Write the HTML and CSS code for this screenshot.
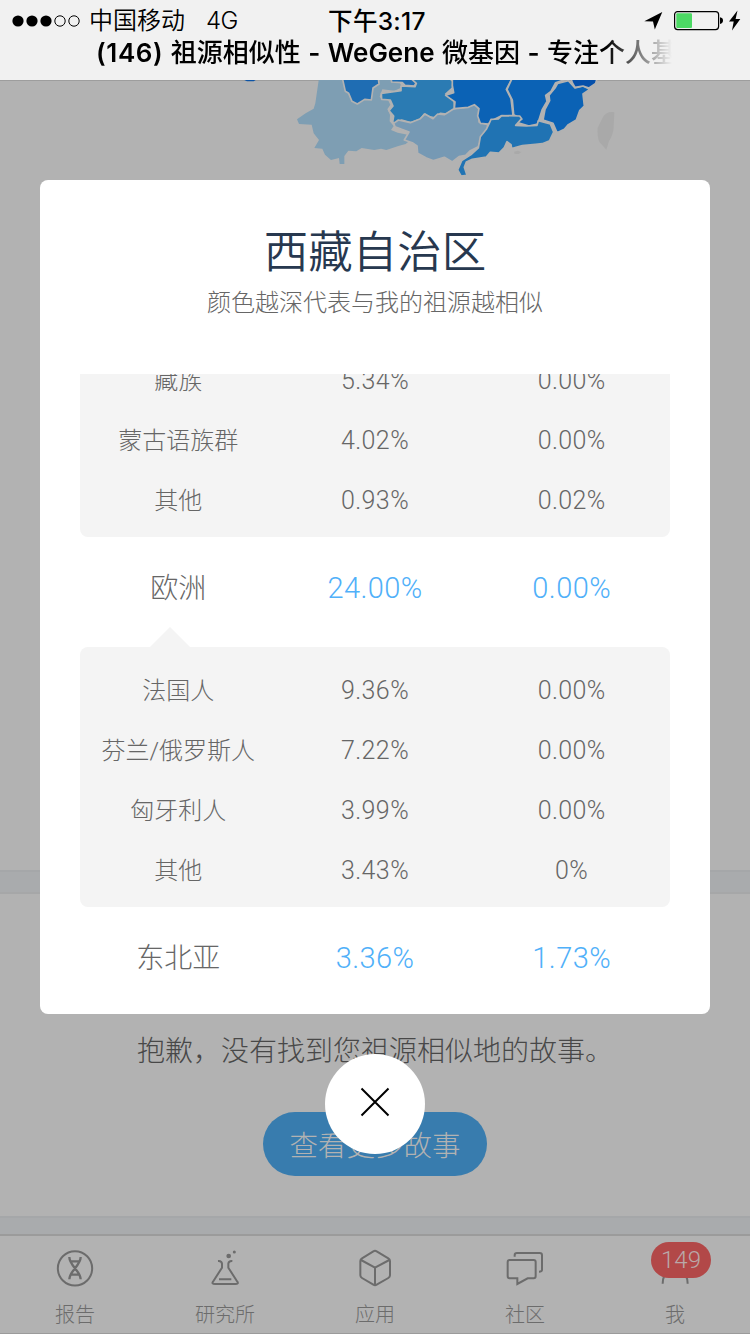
FILE: index.html
```html
<!DOCTYPE html>
<html lang="zh-CN">
<head>
<meta charset="utf-8">
<title>祖源相似性 - WeGene 微基因</title>
<link rel="stylesheet" href="styles.css">
</head>
<body>
<div class="screen">
  <header class="topbar">
    <div class="status">
      <div class="status-left">
        <svg class="signal" width="70" height="14" viewBox="0 0 70 14"><g fill="#000"><circle cx="6" cy="7" r="5.6"/><circle cx="20" cy="7" r="5.6"/><circle cx="34" cy="7" r="5.6"/></g><g fill="none" stroke="#000" stroke-width="1"><circle cx="48" cy="7" r="5.2"/><circle cx="62" cy="7" r="5.2"/></g></svg>
        <span class="carrier">中国移动</span>
        <span class="network">4G</span>
      </div>
      <div class="clock">下午3:17</div>
      <div class="status-right">
        <svg width="100" height="24" viewBox="0 0 100 24">
          <path d="M22.3 4 4.3 13.3 13 13.500 14.8 21.500Z"/>
          <rect x="34.6" y="3.6" width="44" height="18" rx="3" fill="none" stroke="#000" stroke-width="1.2"/>
          <rect x="36.3" y="5.3" width="15.7" height="14.6" rx="1" fill="#4cd964"/>
          <path d="M80 9.2q3 .5 3 3.4t-3 3.4Z"/>
          <path d="M97.500 2.500 89 13.500h4.700L92 22.500l8.300-11.500h-4.700Z"/>
        </svg>
      </div>
    </div>
    <div class="page-title"><span class="count">(146)</span> <span class="han">祖源相似性</span> - WeGene <span class="han">微基因</span> - <span class="han">专注个人基</span></div>
  </header>

  <main class="page">
    <section class="map-section">
      <svg class="map" width="400" height="100" viewBox="0 12 1200 300">
        <path fill="#0c53a5" d="M28 12h34l-6 4H36Z"/>
        <g stroke="#b2b2b2" stroke-width="5" stroke-linejoin="round">
          <path stroke="none" fill="#7e9eb3" d="M252 6H470l-2 12 26 2 8 14-24 10-36-4-8 22 8 10 16-2 8 16-9 14 8 16-1 20 12 14-8 12 20 8 30 6 4 20-10 8-22 6-36 12-16-4-20 4-38-6-16 10-24-2-12 16v24h-14l-2-18-24 6-18-16-8-18-24-2 14-24-16-20-6-26-38-2-6-14 26-18 24-14 5-16Z"/>
          <path fill="#1f6db3" d="M322 6h108l2 18-18 12-5 36-20-2-22 14-16-8-10-24-10-6Z"/>
          <path fill="#1f6db3" d="M468 6h62l14 14-6 10-28-2-8-8-32-2Z"/>
          <path fill="#2b7bb3" d="M498 44v-14l42 2 4-10-18-16h116l12 10-2 20-20 18 25 6 1 40-24 14-18-2-14 14-20-4-14-8-12 16-30 10-26-8-18 10-9-4 3-18-14-16 12-14-8-18-26-2-1-18Z"/>
          <path fill="#7699b4" d="m476 142 14-10 36 8 30-12 14-14 24 14 14-14 20 2 26-16 10-4 24-2 18-10 20 6 8 14-2 34 26 8-2 20-16 20-10 26-24 12-14 14-20 4-20 16-24-14-32 10-22-8-26-14-2-22-14-10-24-8 14-24-22-8-20-8Z"/>
          <path fill="#0b62b5" d="M652 6h180l-18 34 14 28 6 50-36 2-24 12-14 12-24-2-8-22 4-22-14-12-18 8-42 4 2-20-28-20 24-8-4-22Z"/>
          <path fill="#0b62b5" d="M832 6h172l-42 14-14 26-16 12 4 18-14 24-14 44-26 6-40-12 18-8-24-14-4-44-16-32Z"/>
          <path fill="#2073b3" d="m762 144 6-14 22-1 10-10 54 1 6 8-18 20 32 2 32-2 4-14 36 10 10 24-12 26-22 9-20 2-40 4-32 9-2-12-12-9-8 18-16 16-26-2-12 14-42 7-18 8-6 16 8 24-18 2-10-18 12-28 28-18 22-20 6-34 18-22Z"/>
          <path fill="#0b62b5" d="m1000 14 20 22 24-6 20 10-20 14 4 36-14 14-10 28-24 14-12 14-22 10-12-28-30-10 6-32 14-26-2-16 18-22 8-14Z"/>
          <path fill="#054faa" d="M1008 8h78l-4 14-20 14-18-6-24 4-8-14Z"/>
        </g>
        <g fill="#a9a9a9"><path d="M1138 109q-22-4-34 14l-16 32q-2 30 6 44l20 22 8-26q14-20 14-44Z"/><path d="m838 227 10-3 11 4-8 6-13-1Z"/></g>
      </svg>
    </section>
    <div class="band band-top"></div>
    <section class="story">
      <p class="story-text">抱歉，没有找到您祖源相似地的故事。</p>
      <a class="more-btn">查看更多故事</a>
    </section>
    <div class="band band-bottom"></div>
  </main>

  <nav class="tabs">
    <div class="tab">
      <svg class="icon" viewBox="165 144 120 120"><circle cx="225" cy="205" r="51.500"/><path d="M208 171c0 26 34 42 34 67M242 171c0 26-34 42-34 67M211 184h28M211 224h28" stroke-width="7"/></svg>
      <span>报告</span>
    </div>
    <div class="tab">
      <svg class="icon" viewBox="615 144 120 120"><path d="M654 183q11-1 12 8v12l-27 42q-5 7 6 7h61q11 0 6-7l-27-42v-12q1-9 12-8M657 238h37"/><circle class="solid" cx="686" cy="168" r="7"/><circle class="solid" cx="703" cy="156" r="4.500"/></svg>
      <span>研究所</span>
    </div>
    <div class="tab">
      <svg class="icon" viewBox="1065 144 120 120"><path d="M1120 154q5-3 10 0l35 21q5 3 5 8v43q0 5-5 8l-35 20q-5 3-10 0l-34-20q-5-3-5-8v-43q0-5 5-8ZM1083 180l42 23 43-23M1125 203v52"/></svg>
      <span>应用</span>
    </div>
    <div class="tab">
      <svg class="icon" viewBox="390 144 120 120"><path d="M404 180h72q6 0 6 6v42q0 7-6 7h-18l-31 17v-17h-23q-6 0-6-7v-42q0-6 6-6ZM419 170v-4q0-7 7-7h68q7 0 7 7v43q0 6-9 6"/></svg>
      <span>社区</span>
    </div>
    <div class="tab">
      <svg class="icon" viewBox="840 144 120 120"><path d="M863 251q0-26 15-32M938 251q0-26-15-32"/><circle cx="900" cy="185" r="25"/></svg>
      <span>我</span>
      <b class="badge">149</b>
    </div>
  </nav>

  <div class="modal">
    <h1 class="modal-title">西藏自治区</h1>
    <p class="modal-sub">颜色越深代表与我的祖源越相似</p>
    <div class="scroll">
      <div class="group group-first">
        <div class="row"><span>藏族</span><span class="num">5.34%</span><span class="num">0.00%</span></div>
        <div class="row"><span>蒙古语族群</span><span class="num">4.02%</span><span class="num">0.00%</span></div>
        <div class="row"><span>其他</span><span class="num">0.93%</span><span class="num">0.02%</span></div>
      </div>
      <div class="row region"><span>欧洲</span><span class="num pct">24.00%</span><span class="num pct">0.00%</span></div>
      <div class="group group-arrow">
        <div class="row"><span>法国人</span><span class="num">9.36%</span><span class="num">0.00%</span></div>
        <div class="row"><span>芬兰/俄罗斯人</span><span class="num">7.22%</span><span class="num">0.00%</span></div>
        <div class="row"><span>匈牙利人</span><span class="num">3.99%</span><span class="num">0.00%</span></div>
        <div class="row"><span>其他</span><span class="num">3.43%</span><span class="num">0%</span></div>
      </div>
      <div class="row region"><span>东北亚</span><span class="num pct">3.36%</span><span class="num pct">1.73%</span></div>
    </div>
  </div>
  <div class="close"><svg width="30" height="30" viewBox="0 0 30 30"><path d="M1.500 1.500l27 27M28.500 1.500l-27 27" stroke="#000" stroke-width="2" fill="none"/></svg></div>
</div>
</body>
</html>
```

FILE: styles.css
```css
* { box-sizing: border-box; }

body {
  margin: 0;
  font-family: Roboto, "Noto Sans CJK SC", sans-serif;
  font-weight: 300;
}

.screen {
  position: relative;
  display: flex;
  flex-direction: column;
  width: 750px;
  height: 1334px;
  overflow: hidden;
  background: #b2b2b2;
}

/* Status bar and browser title */
.topbar {
  height: 81px;
  flex: none;
  background: #f1f1f1;
  border-bottom: 1px solid #9d9d9d;
  color: #000;
  font-family: Inter, "Noto Sans CJK SC", sans-serif;
}

.status {
  display: grid;
  grid-template-columns: 1fr auto 1fr;
  align-items: center;
  height: 40px;
  font-size: 24px;
  font-weight: 400;
  line-height: 42px;
}

.status-left { display: flex; align-items: center; padding-left: 12px; }
.signal { margin-top: -1px; }
.carrier { margin-left: 7px; font-weight: 350; }
.network { margin-left: 21px; font-size: 24px; letter-spacing: -0.5px; font-weight: 350; }
.clock { font-size: 24.500px; font-weight: 500; letter-spacing: 0.3px; padding-left: 4px; }
.status-right { display: flex; justify-content: flex-end; padding-right: 10px; }
.status-right svg { overflow: visible; margin-top: -3px; }

.page-title {
  width: 576px;
  margin-left: 96px;
  height: 40px;
  margin-top: -7px;
  line-height: 39px;
  font-size: 26px;
  font-weight: 600;
  word-spacing: 0.9px;
  white-space: nowrap;
  overflow: hidden;
  -webkit-mask-image: linear-gradient(90deg, #000 510px, transparent 576px);
  mask-image: linear-gradient(90deg, #000 510px, transparent 576px);
}

.count { letter-spacing: 0.6px; }
.han { font-weight: 500; }

/* Dimmed page */
.page { flex: 1; display: flex; flex-direction: column; }
.map-section { height: 789px; }
.map { display: block; margin-left: 235px; margin-top: -1px; }
.band { background: #a9abad; border-top: 2px solid #a5a7a9; }
.band-top { height: 24px; border-bottom: 2px solid #a6a7a8; }
.band-bottom { height: 18px; }

.story {
  height: 322px;
  display: flex;
  flex-direction: column;
  align-items: center;
  padding-top: 138px;
}

.story-text { margin: 0; height: 40px; line-height: 40px; font-size: 28px; color: #484848; white-space: nowrap; }

.more-btn {
  width: 224px;
  height: 64px;
  margin-top: 40px;
  border-radius: 32px;
  background: #387cae;
  color: #b2b2b2;
  font-size: 28.500px;
  line-height: 70px;
  text-align: center;
}

.tabs {
  display: grid;
  grid-template-columns: repeat(5, 1fr);
  flex: none;
  height: 100px;
  border-top: 2px solid #9b9b9b;
  border-bottom: 1px solid #9b9b9b;
}

.tab {
  position: relative;
  display: flex;
  flex-direction: column;
  align-items: center;
  padding-top: 12px;
  color: #6c6c6c;
  font-size: 20px;
}

.tab span { margin-top: 12px; line-height: 30px; }
.icon { width: 40px; height: 40px; flex: none; fill: none; stroke: #6c6c6c; stroke-width: 6; }
.solid { fill: #6c6c6c; stroke: none; }

.badge {
  position: absolute;
  top: 6px;
  left: 51px;
  width: 60px;
  height: 36px;
  border-radius: 18px;
  background: #b24848;
  color: #b9a9a9;
  font-size: 24px;
  font-weight: 300;
  line-height: 36px;
  text-align: center;
}

/* Result dialog */
.modal {
  position: absolute;
  top: 180px;
  left: 40px;
  width: 670px;
  height: 834px;
  border-radius: 8px;
  background: #fff;
  overflow: hidden;
  padding: 40px 40px 0;
  text-align: center;
}

.modal-title { margin: 0; height: 62px; line-height: 67px; font-size: 44.500px; font-weight: 350; color: #27384f; }
.modal-sub { margin: 0; height: 40px; line-height: 42px; font-size: 24px; color: #666; }
.scroll { height: 640px; margin-top: 52px; overflow: hidden; }

.group { background: #f4f4f4; border-radius: 8px; padding: 14px 0 6px; }
.group-first { margin-top: -23px; padding-top: 0; }
.group-arrow { position: relative; }
.group-arrow::before {
  content: "";
  position: absolute;
  left: 70px;
  top: -20px;
  border: 20px solid transparent;
  border-top: 0;
  border-bottom-color: #f4f4f4;
}

.row {
  display: grid;
  grid-template-columns: repeat(3, 1fr);
  height: 60px;
  line-height: 60px;
  font-size: 24px;
  color: #666;
  white-space: nowrap;
}

.num { font-size: 25px; letter-spacing: 0.4px; }
.region { height: 110px; line-height: 104px; font-size: 28px; }
.region .num { font-size: 29px; line-height: 102px; }
.pct { color: #50b0f9; }

.close {
  position: absolute;
  left: 325px;
  top: 1054px;
  width: 100px;
  height: 100px;
  border-radius: 50%;
  background: #fff;
  display: flex;
  align-items: center;
  justify-content: center;
  padding-bottom: 4px;
}
```
